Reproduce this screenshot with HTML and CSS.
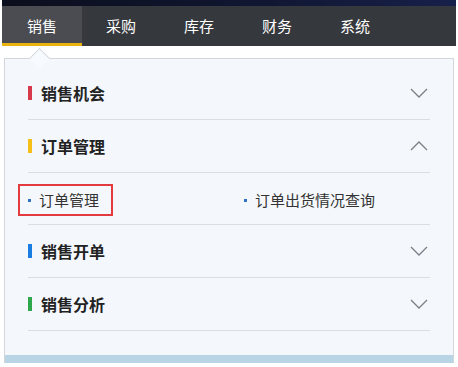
FILE: index.html
```html
<!DOCTYPE html>
<html lang="zh-CN">
<head>
<meta charset="utf-8">
<title>销售菜单</title>
<link rel="stylesheet" href="styles.css">
</head>
<body>
<header class="topbar">
  <div class="stripe"></div>
  <nav class="nav">
    <a class="tab active">销售</a>
    <a class="tab">采购</a>
    <a class="tab">库存</a>
    <a class="tab">财务</a>
    <a class="tab">系统</a>
  </nav>
</header>
<section class="panel">
  <span class="caret"></span>
  <div class="group">
    <div class="head">
      <span class="mark red"></span>
      <span class="title">销售机会</span>
      <svg class="chev" width="18" height="10" viewBox="0 0 18 10"><polyline points="1,1 9,9 17,1" fill="none" stroke="#7b7f86" stroke-width="1.3"/></svg>
    </div>
  </div>
  <div class="group">
    <div class="head">
      <span class="mark yellow"></span>
      <span class="title">订单管理</span>
      <svg class="chev" width="18" height="10" viewBox="0 0 18 10"><polyline points="1,9 9,1 17,9" fill="none" stroke="#7b7f86" stroke-width="1.3"/></svg>
    </div>
    <div class="subs">
      <a class="sub selected"><span class="dot"></span>订单管理</a>
      <a class="sub"><span class="dot"></span>订单出货情况查询</a>
    </div>
  </div>
  <div class="group">
    <div class="head">
      <span class="mark blue"></span>
      <span class="title">销售开单</span>
      <svg class="chev" width="18" height="10" viewBox="0 0 18 10"><polyline points="1,1 9,9 17,1" fill="none" stroke="#7b7f86" stroke-width="1.3"/></svg>
    </div>
  </div>
  <div class="group">
    <div class="head">
      <span class="mark green"></span>
      <span class="title">销售分析</span>
      <svg class="chev" width="18" height="10" viewBox="0 0 18 10"><polyline points="1,1 9,9 17,1" fill="none" stroke="#7b7f86" stroke-width="1.3"/></svg>
    </div>
  </div>
  <div class="band"></div>
</section>
</body>
</html>
```

FILE: styles.css
```css
* { box-sizing: border-box; }
html, body {
  margin: 0;
  padding: 0;
  background: #ffffff;
  font-family: "Noto Sans CJK SC", "Microsoft YaHei", sans-serif;
}
.topbar {
  margin: 0 2px 0 2px;
}
.stripe {
  height: 6px;
  background: linear-gradient(90deg, #0b0e1c 0%, #111733 60%, #17204a 100%);
}
.nav {
  display: flex;
  height: 40px;
  background: #35383d;
}
.tab {
  width: 78px;
  height: 40px;
  line-height: 40px;
  text-align: center;
  color: #ffffff;
  font-size: 15px;
  text-decoration: none;
}
.tab.active {
  width: 80px;
  background: #4a4c51;
  box-shadow: inset 0 -3px 0 #e9b20e;
}
.panel {
  position: relative;
  margin: 12px 4px 0 4px;
  border: 1px solid #d3d7dc;
  border-bottom: none;
  background: #f4f8fd;
  padding: 8px 23px 0 23px;
}
.caret {
  position: absolute;
  top: -8px;
  left: 27px;
  width: 15px;
  height: 15px;
  background: #f7fafe;
  border-top: 1px solid #d3d7dc;
  border-left: 1px solid #d3d7dc;
  transform: rotate(45deg);
}
.group {
  border-bottom: 1px solid #d9dee4;
}
.head {
  display: flex;
  align-items: center;
  height: 52px;
}
.mark {
  width: 4px;
  height: 14px;
  margin-right: 9px;
}
.red { background: #d63a4b; }
.yellow { background: #f6bf17; }
.blue { background: #1a7de2; }
.green { background: #2fa84d; }
.title {
  flex: 1;
  font-size: 16px;
  font-weight: 700;
  color: #222222;
  line-height: 20px;
}
.chev {
  margin-right: 2px;
}
.subs {
  display: grid;
  grid-template-columns: 216px 1fr;
  align-items: center;
  border-top: 1px solid #d9dee4;
  padding: 11px 0 8px 0;
  height: 52px;
}
.sub {
  display: flex;
  align-items: center;
  font-size: 15px;
  color: #333333;
  line-height: 28px;
  text-decoration: none;
  justify-self: start;
}
.sub.selected {
  margin-left: -10px;
  border: 2px solid #e23a3e;
  padding: 0 12px 0 8px;
  height: 32px;
}
.dot {
  width: 3px;
  height: 3px;
  background: #2f74c2;
  margin-right: 8px;
}
.band {
  height: 8px;
  margin: 24px -23px 0 -23px;
  background: #b9d5e5;
}
```
